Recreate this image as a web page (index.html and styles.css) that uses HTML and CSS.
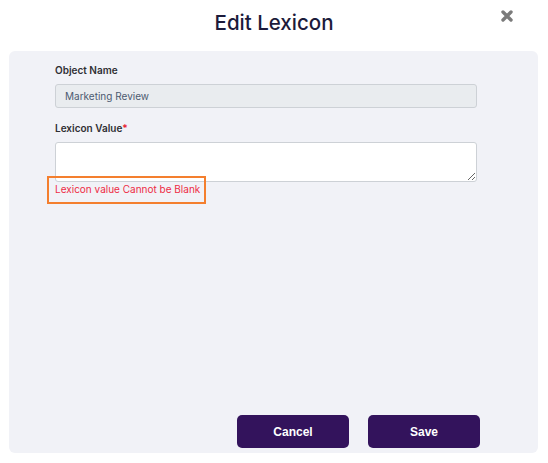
FILE: index.html
```html
<!DOCTYPE html>
<html lang="en">
<head>
<meta charset="utf-8">
<title>Edit Lexicon</title>
<link rel="stylesheet" href="styles.css">
</head>
<body>
<div class="modal">
  <header class="modal-header">
    <h1 class="modal-title">Edit Lexicon</h1>
    <button class="close-btn" aria-label="Close">
      <svg width="12" height="12" viewBox="0 0 12 12"><path d="M2 2 L10 10 M10 2 L2 10" stroke="#7b7b7b" stroke-width="3.4" stroke-linecap="round"/></svg>
    </button>
  </header>
  <section class="panel">
    <div class="form">
      <label class="label">Object Name</label>
      <input class="input" type="text" value="Marketing Review" disabled>
      <label class="label label-gap">Lexicon Value<span class="req">*</span></label>
      <textarea class="textarea"></textarea>
      <div class="error-wrap">
        <span class="error">Lexicon value Cannot be Blank</span>
        <span class="highlight"></span>
      </div>
    </div>
    <div class="actions">
      <button class="btn">Cancel</button>
      <button class="btn">Save</button>
    </div>
  </section>
</div>
</body>
</html>
```

FILE: styles.css
```css
* { box-sizing: border-box; }
html, body { margin: 0; padding: 0; background: #ffffff; }
body { font-family: Inter, "Noto Sans", sans-serif; }

.modal { width: 548px; height: 463px; position: relative; }

.modal-header {
  height: 51px;
  padding-top: 11px;
  text-align: center;
}
.modal-title {
  margin: 0;
  font-size: 20.5px;
  line-height: 23px;
  font-weight: 500;
  color: #1c1b3b;
}
.close-btn {
  position: absolute;
  top: 10px;
  left: 501px;
  width: 12px;
  height: 12px;
  padding: 0;
  border: 0;
  background: none;
  display: block;
}
.close-btn svg { display: block; }

.panel {
  margin: 0 10px 0 9px;
  height: 402px;
  background: #f1f2f7;
  border-radius: 6px;
  padding: 12px 61px 5px 46px;
  display: flex;
  flex-direction: column;
}

.form { display: flex; flex-direction: column; }

.label {
  font-size: 10px;
  line-height: 14px;
  font-weight: 600;
  color: #2f2f33;
}
.label-gap { margin-top: 13px; }
.req { color: #e8202f; }

.input {
  margin-top: 7px;
  height: 24px;
  width: 422px;
  border: 1px solid #cdd1d6;
  border-radius: 3px;
  background: #e9ecef;
  padding: 0 9px;
  font-family: Inter, "Noto Sans", sans-serif;
  font-size: 10px;
  color: #4c5a70;
  -webkit-text-fill-color: #4c5a70;
  opacity: 1;
}

.textarea {
  display: block;
  margin-top: 7px;
  width: 422px;
  height: 40px;
  border: 1px solid #cdd1d6;
  border-radius: 3px;
  background: #ffffff;
  resize: vertical;
}

.error-wrap { position: relative; height: 14px; }
.error {
  display: block;
  font-size: 10px;
  line-height: 14px;
  color: #ee2b45;
}
.highlight {
  position: absolute;
  left: -8px;
  top: -6px;
  width: 159px;
  height: 28px;
  border: 2px solid #f47f2e;
}

.actions {
  margin-top: auto;
  margin-right: -3px;
  display: flex;
  justify-content: flex-end;
  gap: 19px;
}
.btn {
  width: 112px;
  height: 33px;
  border: 0;
  border-radius: 5px;
  background: #33135c;
  color: #ffffff;
  font-family: "Liberation Sans", Arial, sans-serif;
  font-size: 12px;
  font-weight: 700;
}
```
